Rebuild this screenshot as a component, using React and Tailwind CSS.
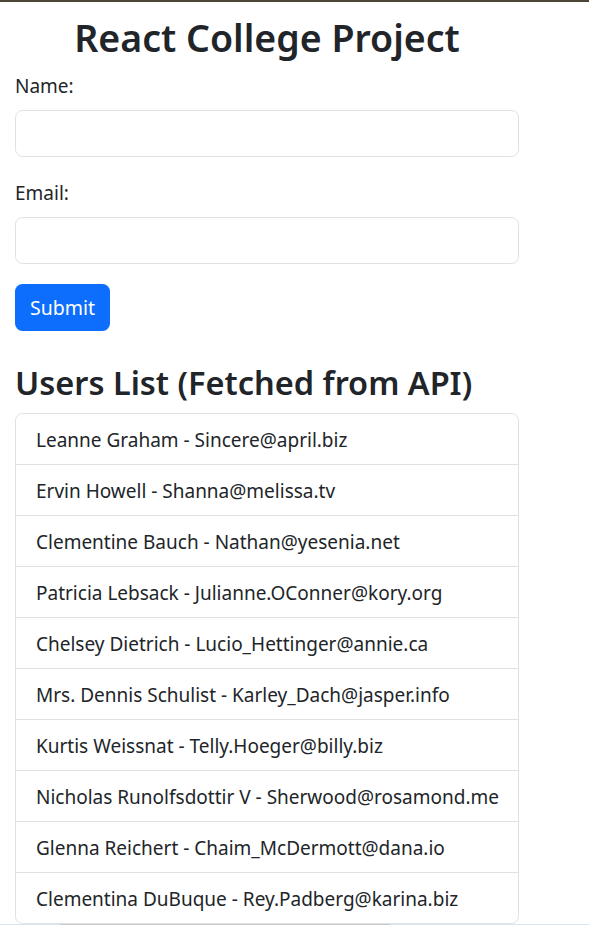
import React from "react";

const users = [
  ["Leanne Graham", "Sincere@april.biz"],
  ["Ervin Howell", "Shanna@melissa.tv"],
  ["Clementine Bauch", "Nathan@yesenia.net"],
  ["Patricia Lebsack", "Julianne.OConner@kory.org"],
  ["Chelsey Dietrich", "Lucio_Hettinger@annie.ca"],
  ["Mrs. Dennis Schulist", "Karley_Dach@jasper.info"],
  ["Kurtis Weissnat", "Telly.Hoeger@billy.biz"],
  ["Nicholas Runolfsdottir V", "Sherwood@rosamond.me"],
  ["Glenna Reichert", "Chaim_McDermott@dana.io"],
  ["Clementina DuBuque", "Rey.Padberg@karina.biz"],
];

export default function App() {
  return (
    <div className="w-[589px] h-[925px] overflow-hidden bg-white text-[#212529] font-['Noto_Sans',sans-serif] flex flex-col">
      <div className="h-[2px] bg-[#4d4536] shrink-0" />
      <div className="w-[504px] ml-[15px] flex flex-col shrink-0">
        <h1 className="mt-[13px] mb-[9px] text-center text-[37.5px] leading-[46px] font-semibold">
          React College Project
        </h1>
        <label className="block text-[19px] leading-[30px] pt-[1px] mb-[9px]">Name:</label>
        <input
          type="text"
          className="h-[47px] w-full border border-[#dee2e6] rounded-[7.5px] px-[15px] text-[19px] mb-[20px] outline-none"
        />
        <label className="block text-[19px] leading-[30px] pt-[1px] mb-[9px]">Email:</label>
        <input
          type="email"
          className="h-[47px] w-full border border-[#dee2e6] rounded-[7.5px] px-[15px] text-[19px] mb-[20px] outline-none"
        />
        <div>
          <button className="h-[47px] w-[95px] bg-[#0d6efd] text-white text-[19.5px] rounded-[7.5px] flex items-center justify-center pt-[1px]">
            Submit
          </button>
        </div>
        <h2 className="mt-[33px] mb-[11px] text-[32.5px] leading-[38px] font-semibold whitespace-nowrap">
          Users List (Fetched from API)
        </h2>
        <ul className="border border-[#dee2e6] rounded-[7.5px] flex flex-col">
          {users.map(([n, e], i) => (
            <li
              key={i}
              className={
                "px-[20px] pt-[2px] flex items-center text-[19px] whitespace-nowrap " +
                (i > 0 ? "h-[51px] border-t border-[#dee2e6]" : "h-[50px]")
              }
            >
              {n} - {e}
            </li>
          ))}
        </ul>
      </div>
      <div className="h-[2px] flex shrink-0">
        <div className="w-[60px] bg-[#dbe5ee]" />
        <div className="w-[330px] bg-[#c9c9c9]" />
        <div className="flex-1 bg-[#dbe5ee]" />
      </div>
    </div>
  );
}
